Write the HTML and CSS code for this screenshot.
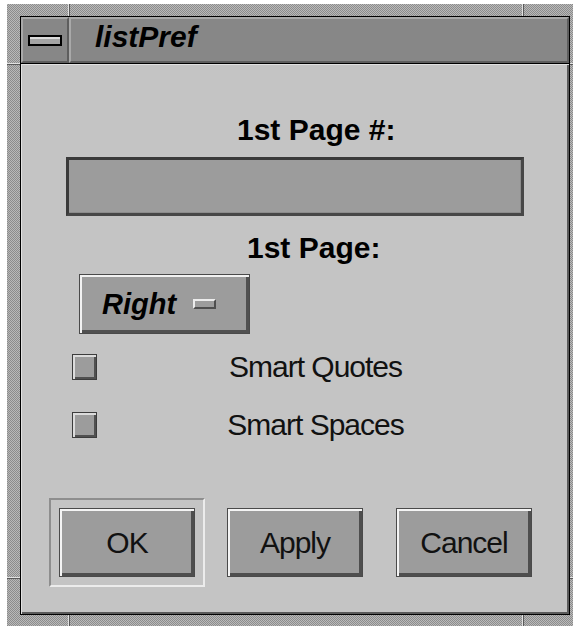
FILE: index.html
```html
<!DOCTYPE html>
<html lang="en">
<head>
<meta charset="utf-8">
<title>listPref</title>
<link rel="stylesheet" href="styles.css">
</head>
<body>
<div class="window">
  <div class="frame">
    <div class="titlebar">
      <div class="menu-btn"><span class="menu-glyph"></span></div>
      <div class="title">listPref</div>
    </div>
    <div class="content">
      <div class="label label-page-num">1st Page #:</div>
      <div class="field"></div>
      <div class="label label-page">1st Page:</div>
      <div class="option">
        <span class="option-text">Right</span>
        <span class="option-glyph"></span>
      </div>
      <div class="check-row">
        <span class="check"></span>
        <span class="check-label">Smart Quotes</span>
      </div>
      <div class="check-row check-row-2">
        <span class="check"></span>
        <span class="check-label">Smart Spaces</span>
      </div>
      <div class="actions">
        <div class="default-frame"><button class="btn">OK</button></div>
        <button class="btn btn-apply">Apply</button>
        <button class="btn btn-cancel">Cancel</button>
      </div>
    </div>
  </div>
</div>
</body>
</html>
```
FILE: styles.css
```css
html, body {
  margin: 0;
  background: #ffffff;
  overflow: hidden;
  font-family: "Liberation Sans", Arial, sans-serif;
}

/* Window-manager frame: dithered border with resize-corner ticks */
.window {
  margin: 4px 0 0 7px;
  padding: 12px 13px;
  width: 550px;
  height: 599px;
  background:
    linear-gradient(to right, transparent 61px, #e2e2e2 61px, #e2e2e2 62px, #5a5a5a 62px, #5a5a5a 63px, transparent 63px),
    linear-gradient(to right, transparent 515px, #e2e2e2 515px, #e2e2e2 516px, #5a5a5a 516px, #5a5a5a 517px, transparent 517px),
    linear-gradient(to bottom, transparent 59px, #e2e2e2 59px, #e2e2e2 60px, #5a5a5a 60px, #5a5a5a 61px, transparent 61px),
    linear-gradient(to bottom, transparent 573px, #e2e2e2 573px, #e2e2e2 574px, #5a5a5a 574px, #5a5a5a 575px, transparent 575px),
    repeating-conic-gradient(#8c8c8c 0% 25%, #b9b9b9 0% 50%) 0 0 / 2px 2px;
}

.frame {
  width: 550px;
  height: 599px;
  box-sizing: border-box;
  border: 1px solid #000;
  display: flex;
  flex-direction: column;
}

/* Title bar */
.titlebar {
  flex: none;
  height: 46px;
  display: flex;
  background: #878787;
  border-bottom: 1px solid #000;
}

.menu-btn {
  width: 48px;
  box-sizing: border-box;
  border: 2px solid;
  border-color: #a9a9a9 #5e5e5e #5e5e5e #a9a9a9;
  display: flex;
  align-items: center;
  justify-content: center;
}

.menu-glyph {
  width: 34px;
  height: 11px;
  box-sizing: border-box;
  border: 2px solid #000;
  background: #a4a4a4;
  box-shadow: inset 0 2px 0 #dadada;
}

.title {
  flex: 1;
  box-sizing: border-box;
  border: 2px solid;
  border-color: #a9a9a9 #5e5e5e #5e5e5e #a9a9a9;
  padding-left: 24px;
  font-style: italic;
  font-weight: bold;
  font-size: 30px;
  line-height: 35px;
  color: #000;
}

/* Dialog body */
.content {
  flex: 1;
  background: #c4c4c4;
  box-shadow: inset 1px 1px 0 #e2e2e2, inset -2px -2px 0 #5a5a5a;
  padding-top: 51px;
  display: flex;
  flex-direction: column;
  align-items: flex-start;
}

.label {
  font-weight: bold;
  font-size: 30px;
  line-height: 30px;
  color: #000;
}

.label-page-num {
  margin-left: 216px;
}

.label-page {
  margin: 17px 0 0 226px;
}

.field {
  margin: 12px 0 0 45px;
  width: 458px;
  height: 59px;
  box-sizing: border-box;
  background: #9c9c9c;
  border: 3px solid;
  border-color: #3a3a3a #474747 #474747 #3a3a3a;
  box-shadow: inset -1px -1px 0 #8c8c8c;
}

/* Option menu button */
.option {
  margin: 11px 0 0 58px;
  width: 171px;
  height: 60px;
  box-sizing: border-box;
  border: 1px solid #4a4a4a;
  background: #9c9c9c;
  box-shadow: inset 2px 2px 0 #f2f2f2, inset -3px -3px 0 #505050;
  display: flex;
  align-items: center;
  padding-left: 22px;
}

.option-text {
  font-style: italic;
  font-weight: bold;
  font-size: 29px;
  color: #000;
}

.option-glyph {
  margin-left: 17px;
  width: 23px;
  height: 10px;
  box-sizing: border-box;
  border: 2px solid;
  border-color: #ececec #4e4e4e #4e4e4e #ececec;
  background: #9c9c9c;
}

/* Toggle rows */
.check-row {
  margin-top: 18px;
  width: 100%;
  height: 30px;
  box-sizing: border-box;
  padding: 0 35px 0 51px;
  display: flex;
  align-items: center;
}

.check-row-2 {
  margin-top: 28px;
}

.check {
  flex: none;
  width: 25px;
  height: 26px;
  box-sizing: border-box;
  border: 1px solid #3c3c3c;
  background: #9c9c9c;
  box-shadow: inset 2px 2px 0 #dcdcdc, inset -2px -2px 0 #505050;
}

.check-label {
  flex: 1;
  text-align: center;
  font-size: 30px;
  line-height: 30px;
  letter-spacing: -1px;
  color: #111;
}

/* Action buttons */
.actions {
  margin: 58px 0 0 28px;
  display: flex;
  align-items: center;
}

.default-frame {
  width: 156px;
  height: 89px;
  box-sizing: border-box;
  border: 2px solid;
  border-color: #8e8e8e #ececec #ececec #8e8e8e;
  display: flex;
  align-items: center;
  justify-content: center;
}

.btn {
  width: 136px;
  height: 69px;
  box-sizing: border-box;
  padding: 0;
  border: 1px solid #4a4a4a;
  background: #9c9c9c;
  box-shadow: inset 2px 2px 0 #f4f4f4, inset -3px -3px 0 #4e4e4e;
  font-family: "Liberation Sans", Arial, sans-serif;
  font-size: 30px;
  letter-spacing: -1px;
  color: #111;
}

.btn-apply {
  margin-left: 22px;
}

.btn-cancel {
  margin-left: 33px;
}
```
